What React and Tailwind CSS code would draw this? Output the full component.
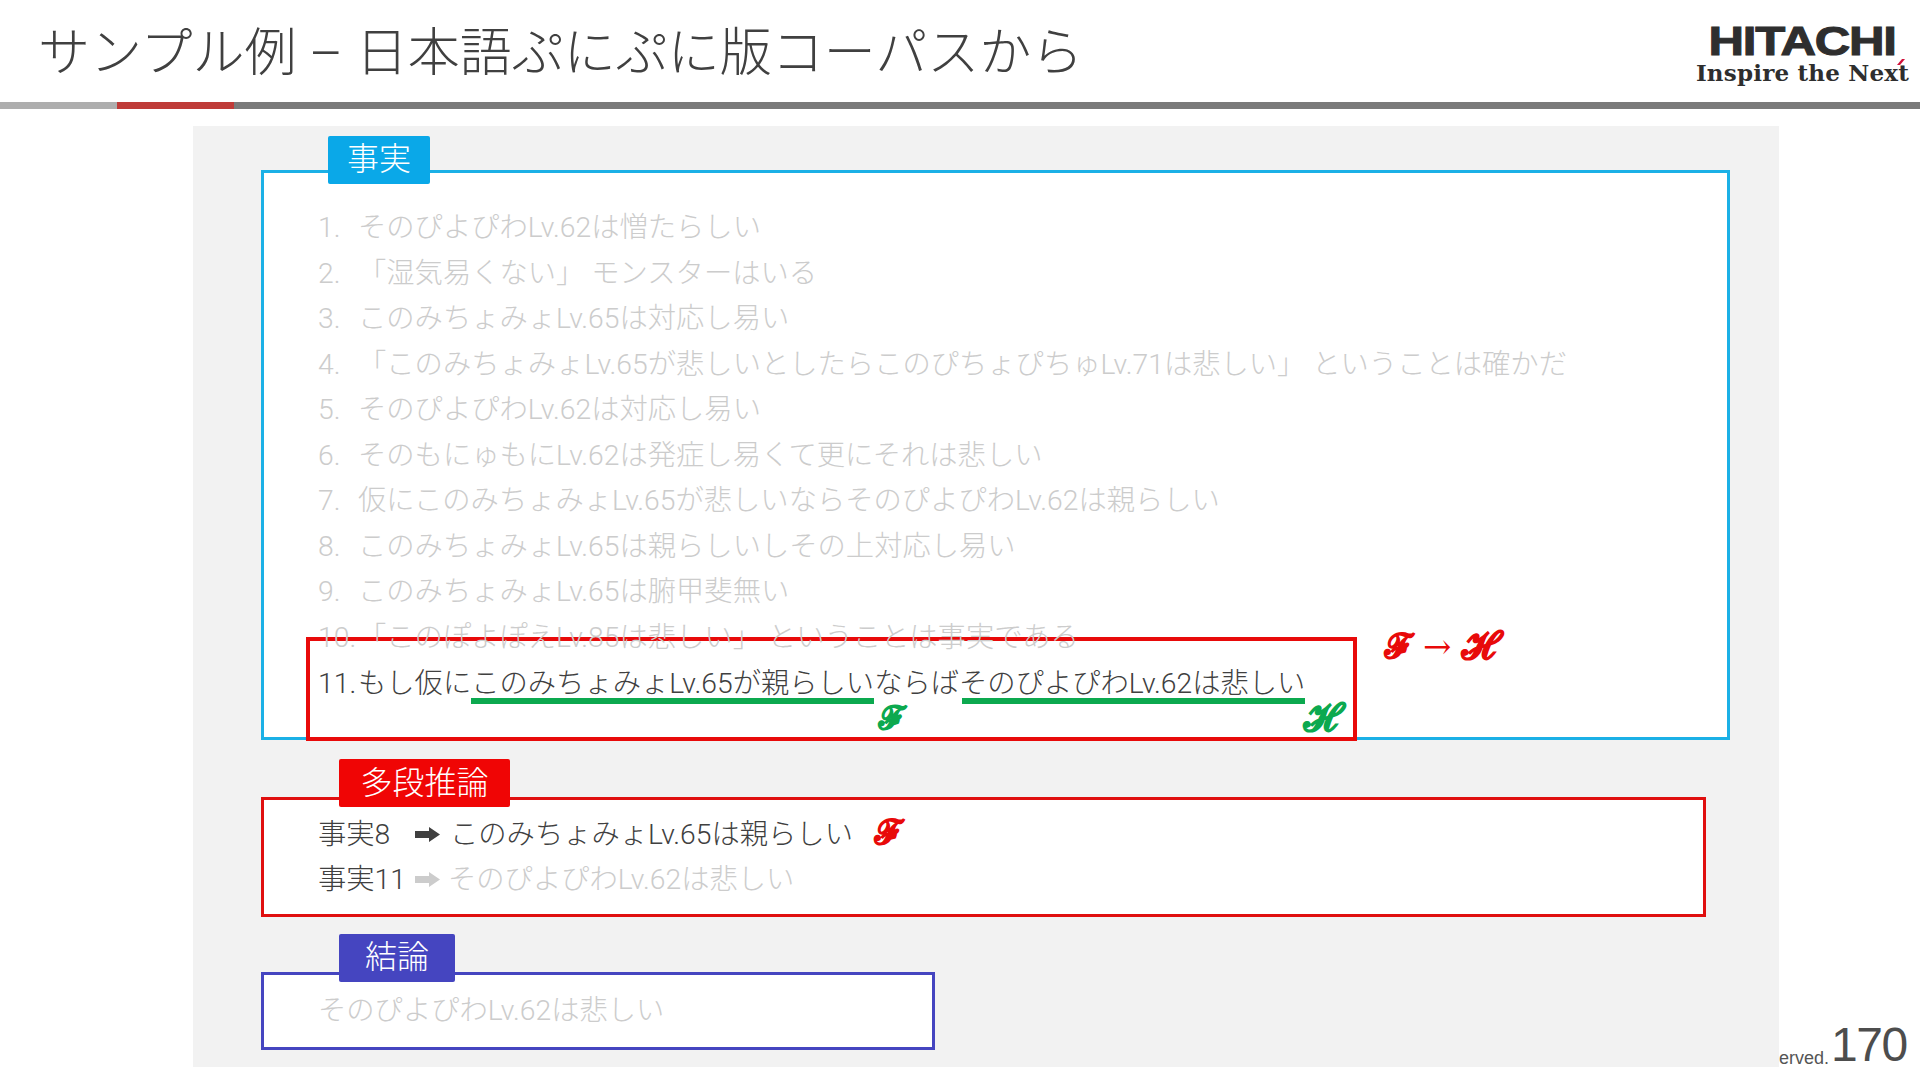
const font = "font-['Roboto','Noto_Sans_CJK_JP',sans-serif] font-light";
const math = "font-['DejaVu_Serif','Liberation_Serif',serif] font-bold not-italic leading-none [-webkit-text-stroke:1.2px_currentColor]";

const facts = [
  ["1.", "そのぴよぴわLv.62は憎たらしい"],
  ["2.", "「湿気易くない」 モンスターはいる"],
  ["3.", "このみちょみょLv.65は対応し易い"],
  ["4.", "「このみちょみょLv.65が悲しいとしたらこのぴちょぴちゅLv.71は悲しい」 ということは確かだ"],
  ["5.", "そのぴよぴわLv.62は対応し易い"],
  ["6.", "そのもにゅもにLv.62は発症し易くて更にそれは悲しい"],
  ["7.", "仮にこのみちょみょLv.65が悲しいならそのぴよぴわLv.62は親らしい"],
  ["8.", "このみちょみょLv.65は親らしいしその上対応し易い"],
  ["9.", "このみちょみょLv.65は腑甲斐無い"],
  ["10.", "「このぽよぽえLv.85は悲しい」 ということは事実である"],
];

function Arrow({ color }) {
  return (
    <svg width="25" height="15" viewBox="0 0 25 15" className="shrink-0">
      <path d="M0 4H14V0L25 7.5L14 15V11H0Z" fill={color} />
    </svg>
  );
}

function Tag({ children, className }) {
  return (
    <div className={`absolute flex h-[48px] items-center justify-center rounded-[2px] text-[32px] text-white ${className}`}>
      {children}
    </div>
  );
}

export default function App() {
  return (
    <div className={`flex h-[1080px] w-[1920px] flex-col overflow-hidden bg-white text-[#404040] ${font}`}>
      <header className="flex h-[102px] items-start justify-between">
        <h1 className="mt-[25px] ml-[38px] text-[52px] leading-[58px] font-light">サンプル例 – 日本語ぷにぷに版コーパスから</h1>
        <div className="relative mt-[23px] mr-[12px] flex w-[211px] flex-col items-center font-['Liberation_Sans',sans-serif] text-[#2e2e2e]">
          <div className="scale-x-[1.23] text-[40px] leading-[36px] font-bold tracking-[-1px] [-webkit-text-stroke:1px_#2e2e2e]">HITACHI</div>
          <div className="mt-[1px] font-['DejaVu_Serif',serif] text-[23px] leading-[26px] font-bold tracking-[0.2px] whitespace-nowrap">Inspire the Next</div>
          <svg width="8" height="6" viewBox="0 0 8 6" className="absolute top-[36px] right-[3px]">
            <path d="M0 6L5 0H8L3 6Z" fill="#d0103a" />
          </svg>
        </div>
      </header>
      <div className="flex h-[7px]">
        <div className="w-[117px] bg-[#aeaeae]" />
        <div className="w-[117px] bg-[#bf3b38]" />
        <div className="flex-1 bg-[#7a7a7a]" />
      </div>
      <div className="mt-[17px] flex items-end">
        <main className="ml-[193px] h-[941px] w-[1586px] bg-[#f2f2f2] pt-[44px] pl-[68px]">
          <section className="relative h-[570px] w-[1469px] border-[3px] border-[#1bb0e6] bg-white pt-[32px] pl-[54px] text-[28.3px] leading-[45.5px]">
            <Tag className="-top-[37px] left-[64px] w-[102px] bg-[#0aa8e8]">事実</Tag>
            <div className="text-[#cccccc]">
              {facts.map(([n, f]) => (
                <div key={n} className="flex whitespace-nowrap">
                  <span className="w-[40px] shrink-0">{n}</span>
                  <span>{f}</span>
                </div>
              ))}
            </div>
            <div className="-mt-[23px] -ml-[12px] flex h-[104px] w-[1051px] flex-col border-[4px] border-[#e80a0a] pt-[20px] pl-[8px] text-[#404040]">
              <div className="flex whitespace-nowrap">
                <span className="w-[40px] shrink-0">11.</span>
                もし仮に
                <span className="relative inline-block">
                  このみちょみょLv.65が親らしい
                  <span className="absolute right-0 bottom-[3px] left-0 h-[6px] bg-[#0ca94f]" />
                  <span className={`absolute top-[41px] left-[calc(100%+5px)] text-[32px] text-[#0ca94f] ${math}`}>ℱ</span>
                </span>
                ならば
                <span className="relative inline-block">
                  そのぴよぴわLv.62は悲しい
                  <span className="absolute right-0 bottom-[3px] left-[3px] h-[6px] bg-[#0ca94f]" />
                  <span className={`absolute top-[38px] left-[calc(100%-1px)] text-[38px] text-[#0ca94f] ${math}`}>ℋ</span>
                </span>
              </div>
            </div>
            <div className={`absolute top-[454px] left-[1121px] flex items-center gap-[10px] text-[34px] whitespace-nowrap text-[#e80a0a] ${math}`}>
              <span>ℱ</span>
              <span className="font-normal [-webkit-text-stroke:0px]">→</span>
              <span className="text-[38px]">ℋ</span>
            </div>
          </section>
          <section className="relative mt-[57px] h-[120px] w-[1445px] border-[3px] border-[#e00f0f] bg-white pt-[12px] pl-[54px] text-[28.3px] leading-[45px]">
            <Tag className="-top-[41px] left-[75px] w-[171px] bg-[#f00505]">多段推論</Tag>
            <div className="flex items-center">
              <span className="w-[97px]">事実8</span>
              <Arrow color="#404040" />
              <span className="ml-[10px]">このみちょみょLv.65は親らしい</span>
              <span className={`ml-[22px] -translate-y-[3px] text-[34px] text-[#e80a0a] ${math}`}>ℱ</span>
            </div>
            <div className="flex items-center">
              <span className="w-[97px]">事実11</span>
              <Arrow color="#cccccc" />
              <span className="ml-[8px] text-[#cccccc]">そのぴよぴわLv.62は悲しい</span>
            </div>
          </section>
          <section className="relative mt-[55px] h-[78px] w-[674px] border-[3px] border-[#4545c0] bg-white pt-[13px] pl-[54px] text-[28.3px] leading-[45.5px] text-[#cccccc]">
            <Tag className="-top-[41px] left-[75px] w-[116px] bg-[#4545c0]">結論</Tag>
            そのぴよぴわLv.62は悲しい
          </section>
        </main>
        <div className="flex items-end font-['Liberation_Sans',sans-serif] font-normal text-[#555555]">
          <span className="text-[18px] leading-[18px]">erved.</span>
          <span className="ml-[2px] text-[48px] leading-[44px] tracking-[-1.5px] text-[#4d4d4d]">170</span>
        </div>
      </div>
    </div>
  );
}
